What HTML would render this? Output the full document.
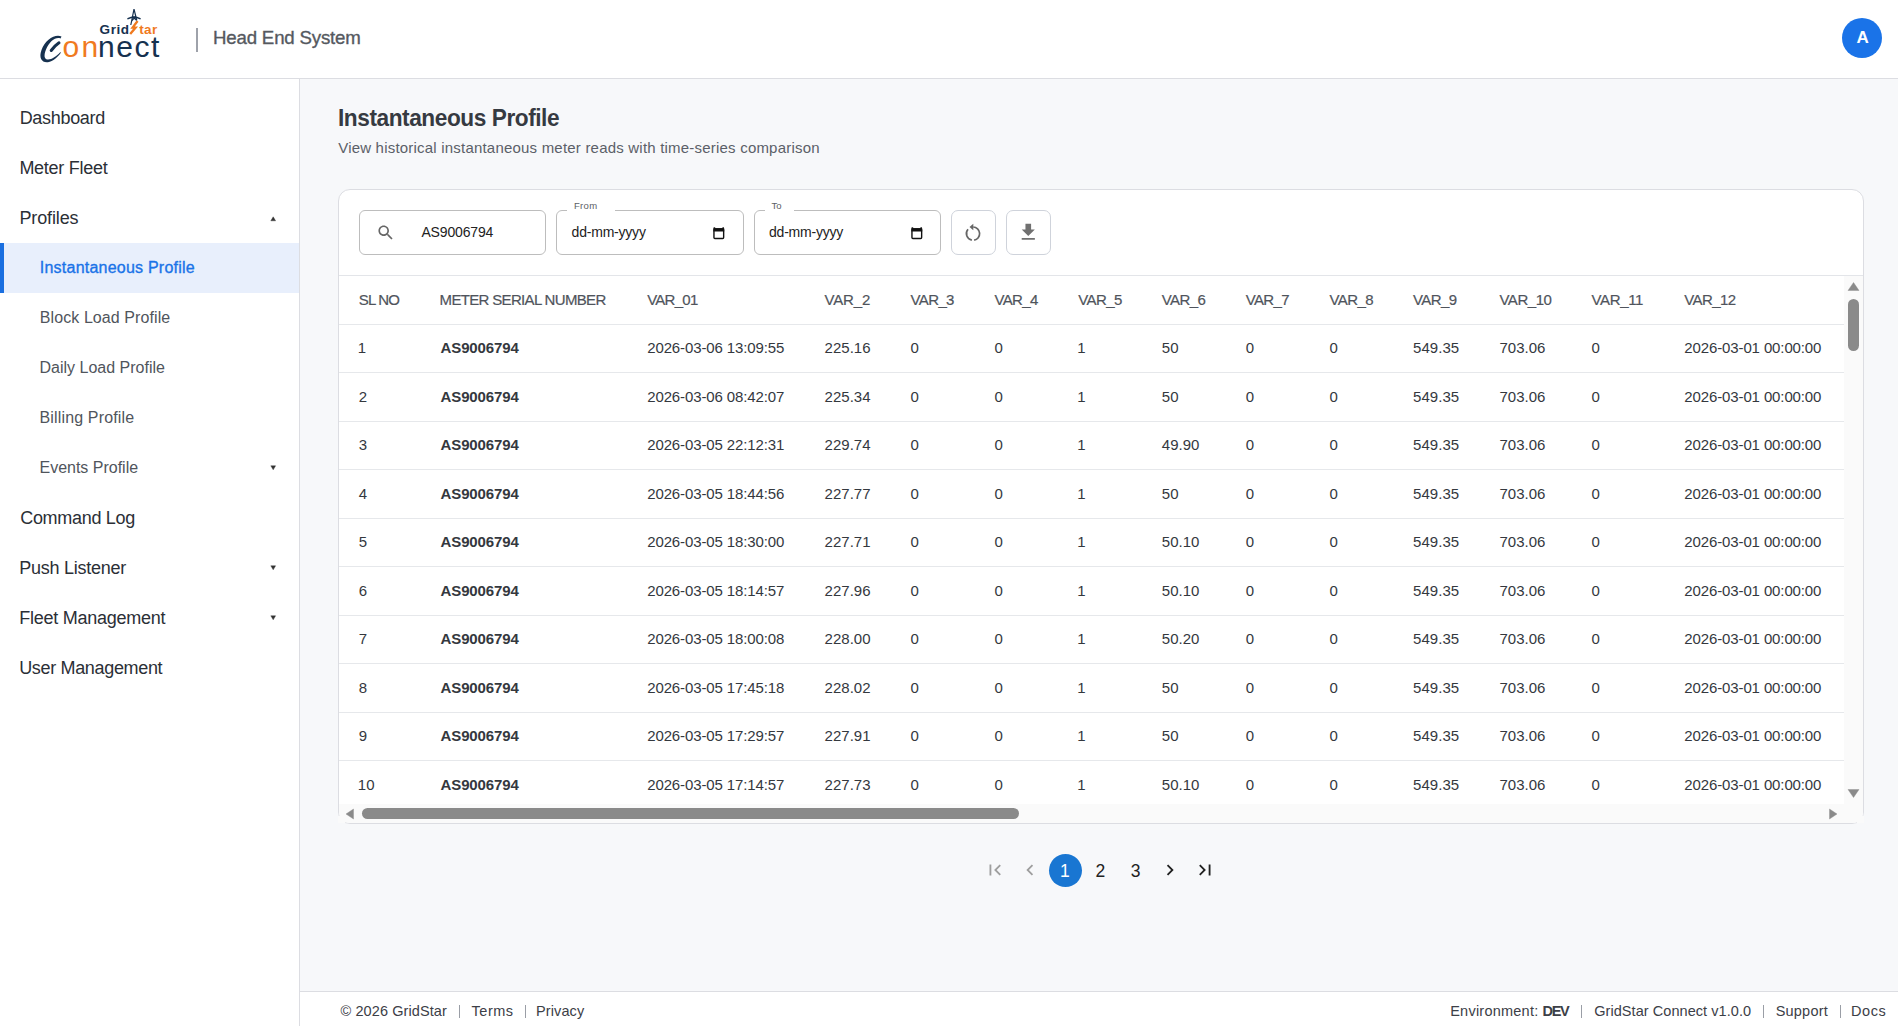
<!DOCTYPE html>
<html><head><meta charset="utf-8">
<style>
*{box-sizing:border-box;margin:0;padding:0}
html,body{width:1898px;height:1026px;overflow:hidden;background:#f7f8fa;font-family:"Liberation Sans",sans-serif}
.a{position:absolute}
.t{position:absolute;line-height:1;white-space:nowrap}
svg{position:absolute;overflow:visible}
</style></head><body>
<!-- header -->
<div class="a" style="left:0;top:0;width:1898px;height:78px;background:#fff"></div>
<div class="a" style="left:0;top:78px;width:1898px;height:1px;background:#dcdde2"></div>
<div class="a" style="left:196px;top:28px;width:2px;height:24px;background:#9ea2aa"></div>
<div class="a" style="left:1842px;top:18px;width:40px;height:40px;border-radius:50%;background:#1a73e8"></div>
<!-- logo -->
<svg style="left:0;top:0" width="200" height="78" viewBox="0 0 200 78">
<text x="99.6" y="33.8" font-family="Liberation Sans" font-weight="bold" font-size="13.5" fill="#16314f" letter-spacing="0.55">Grid</text>
<path d="M137.6 21 L132.6 27.6 L135.6 27.6 L130.2 34" fill="none" stroke="#f07a1f" stroke-width="2.3" stroke-linejoin="miter"/>
<text x="139.2" y="33.8" font-family="Liberation Sans" font-weight="bold" font-size="13.5" fill="#f07a1f" letter-spacing="0.4">tar</text>
<path d="M134 9.2 L130.8 25 M134 9.2 L136.8 20.5 M132.6 16.5 L136.2 20 M135.4 16.5 L131.6 21" fill="none" stroke="#16314f" stroke-width="1.2" stroke-linejoin="round"/>
<path d="M128 18.6 Q134 15.6 140 18.6" fill="none" stroke="#16314f" stroke-width="1.6" stroke-linecap="round"/>
<path d="M61.5 36.5 C55 33.5 45 40 41.5 50 C38.5 58 42 63 48 62.2 C53 61.5 58 57 61 52.5 L60.2 52.3 C56.5 56.5 51.5 59.8 47.5 59.5 C44 59 43.8 55 46 49.5 C49.5 41 56 36.5 60.5 38.5 Z" fill="#16314f"/>
<path d="M51.2 50.5 Q55 45.5 59 42.8" fill="none" stroke="#16314f" stroke-width="3" stroke-linecap="round"/>
<text x="62.4" y="57.4" font-family="Liberation Sans" font-size="30" fill="#f07a1f" letter-spacing="2.3">on</text>
<text x="97.9" y="57.4" font-family="Liberation Sans" font-size="30" fill="#16314f" letter-spacing="1.6">nect</text>
</svg>
<!-- sidebar -->
<div class="a" style="left:0;top:79px;width:299px;height:947px;background:#fff"></div>
<div class="a" style="left:299px;top:79px;width:1px;height:947px;background:#dcdde2"></div>
<div class="a" style="left:0;top:243px;width:299px;height:50px;background:#e8effc"></div>
<div class="a" style="left:0;top:243px;width:4px;height:50px;background:#1a6fe0"></div>
<svg style="left:0;top:0" width="1" height="1"><polygon points="273.20000000000005,216.8 275.6,220.8 270.8,220.8" fill="#333" stroke="#333" stroke-width="0.4" stroke-linejoin="round"/></svg>
<svg style="left:0;top:0" width="1" height="1"><polygon points="270.8,465.8 275.6,465.8 273.20000000000005,469.8" fill="#333" stroke="#333" stroke-width="0.4" stroke-linejoin="round"/></svg>
<svg style="left:0;top:0" width="1" height="1"><polygon points="270.8,565.8 275.6,565.8 273.20000000000005,569.8" fill="#333" stroke="#333" stroke-width="0.4" stroke-linejoin="round"/></svg>
<svg style="left:0;top:0" width="1" height="1"><polygon points="270.8,615.8 275.6,615.8 273.20000000000005,619.8" fill="#333" stroke="#333" stroke-width="0.4" stroke-linejoin="round"/></svg>
<!-- card -->
<div class="a" style="left:338px;top:189px;width:1526px;height:635px;background:#fff;border:1px solid #dcdde2;border-radius:12px;overflow:hidden">
  <div class="a" style="left:0;top:85px;width:1524px;height:1px;background:#e3e5e9"></div>
  <div class="a" style="left:0;top:134px;width:1524px;height:1px;background:#e6e8eb"></div>
<div class="a" style="left:0;top:182px;width:1505px;height:1px;background:#e6e8eb"></div>
<div class="a" style="left:0;top:231px;width:1505px;height:1px;background:#e6e8eb"></div>
<div class="a" style="left:0;top:279px;width:1505px;height:1px;background:#e6e8eb"></div>
<div class="a" style="left:0;top:328px;width:1505px;height:1px;background:#e6e8eb"></div>
<div class="a" style="left:0;top:376px;width:1505px;height:1px;background:#e6e8eb"></div>
<div class="a" style="left:0;top:425px;width:1505px;height:1px;background:#e6e8eb"></div>
<div class="a" style="left:0;top:473px;width:1505px;height:1px;background:#e6e8eb"></div>
<div class="a" style="left:0;top:522px;width:1505px;height:1px;background:#e6e8eb"></div>
<div class="a" style="left:0;top:570px;width:1505px;height:1px;background:#e6e8eb"></div>
  <!-- scrollbars -->
  <div class="a" style="left:1505px;top:86px;width:19px;height:548px;background:#fafafa"></div>
  <div class="a" style="left:0;top:614px;width:1524px;height:20px;background:#fafafa"></div>
  <div class="a" style="left:1509px;top:109px;width:11px;height:52px;border-radius:6px;background:#8a8a8a"></div>
  <div class="a" style="left:23px;top:618px;width:657px;height:11px;border-radius:6px;background:#8a8a8a"></div>
  <svg style="left:0;top:0" width="1" height="1"><polygon points="1514.5,92.5 1520,100.5 1509,100.5" fill="#8a8a8a" stroke="#8a8a8a" stroke-width="0.4" stroke-linejoin="round"/><polygon points="1509,599.5 1520,599.5 1514.5,607.5" fill="#8a8a8a" stroke="#8a8a8a" stroke-width="0.4" stroke-linejoin="round"/><polygon points="14.5,619 14.5,629 7,624.0" fill="#8a8a8a" stroke="#8a8a8a" stroke-width="0.4" stroke-linejoin="round"/><polygon points="1490.5,619 1498,624.0 1490.5,629" fill="#8a8a8a" stroke="#8a8a8a" stroke-width="0.4" stroke-linejoin="round"/></svg>
</div>
<div class="a" style="left:338px;top:816px;width:7px;height:7px;background:#fafafa"></div>
<div class="a" style="left:1857px;top:816px;width:7px;height:7px;background:#fafafa"></div>
<!-- toolbar boxes -->
<div class="a" style="left:359px;top:210px;width:187px;height:45px;border:1px solid #bdbdbd;border-radius:6px;background:#fff"></div>
<div class="a" style="left:556px;top:210px;width:188px;height:45px;border:1px solid #bdbdbd;border-radius:6px;background:#fff"></div>
<div class="a" style="left:567px;top:208px;width:48px;height:4px;background:#fff"></div>
<div class="a" style="left:754px;top:210px;width:187px;height:45px;border:1px solid #bdbdbd;border-radius:6px;background:#fff"></div>
<div class="a" style="left:765px;top:208px;width:29px;height:4px;background:#fff"></div>
<div class="a" style="left:951px;top:210px;width:45px;height:45px;border:1px solid #cfd3db;border-radius:7px;background:#fff"></div>
<div class="a" style="left:1006px;top:210px;width:45px;height:45px;border:1px solid #cfd3db;border-radius:7px;background:#fff"></div>
<svg style="left:376.3px;top:223.2px" width="24" height="24" viewBox="0 0 24 24" transform="scale(1)"><g transform="scale(0.81)"><path fill="#666" d="M15.5 14h-.79l-.28-.27C15.41 12.59 16 11.11 16 9.5 16 5.91 13.09 3 9.5 3S3 5.91 3 9.5 5.91 16 9.5 16c1.61 0 3.09-.59 4.23-1.57l.27.28v.79l5 4.99L20.49 19l-4.99-5zm-6 0C7.01 14 5 11.99 5 9.5S7.01 5 9.5 5 14 7.01 14 9.5 11.99 14 9.5 14z"/></g></svg>
<svg style="left:713.2px;top:226.5px" width="12" height="13" viewBox="0 0 12 13"><rect x="0.95" y="1.9" width="9.7" height="9.6" rx="0.9" fill="none" stroke="#111" stroke-width="1.4"/><rect x="0.4" y="1.2" width="10.8" height="3.3" fill="#111"/><rect x="0.6" y="0.3" width="1.6" height="1.5" fill="#111"/><rect x="9.4" y="0.3" width="1.6" height="1.5" fill="#111"/></svg>
<svg style="left:911.4px;top:226.5px" width="12" height="13" viewBox="0 0 12 13"><rect x="0.95" y="1.9" width="9.7" height="9.6" rx="0.9" fill="none" stroke="#111" stroke-width="1.4"/><rect x="0.4" y="1.2" width="10.8" height="3.3" fill="#111"/><rect x="0.6" y="0.3" width="1.6" height="1.5" fill="#111"/><rect x="9.4" y="0.3" width="1.6" height="1.5" fill="#111"/></svg>
<svg style="left:961.4px;top:221.6px" width="24" height="24" viewBox="0 0 24 24"><path d="M12.2 5 A6.6 6.6 0 0 1 13.15 18.1 M10.85 18.1 A6.6 6.6 0 0 1 7.0 7.3" fill="none" stroke="#666" stroke-width="1.7"/><polygon points="8.5,5.0 12.3,1.7 12.3,8.3" fill="#666"/></svg>
<svg style="left:1017.1px;top:220.8px" width="24" height="24" viewBox="0 0 24 24"><g transform="scale(0.94)"><path fill="#707070" d="M19 9h-4V3H9v6H5l7 7 7-7zM5 18v2h14v-2H5z"/></g></svg>
<!-- pagination -->
<div class="a" style="left:1049px;top:854px;width:33px;height:33px;border-radius:50%;background:#1976d2"></div>
<svg style="left:983.5px;top:859.3px" width="24" height="24" viewBox="0 0 24 24"><g transform="scale(0.917)"><path fill="#9e9e9e" d="M18.41 16.59L13.82 12l4.59-4.59L17 6l-6 6 6 6zM6 6h2v12H6z"/></g></svg>
<svg style="left:1019.4px;top:859.3px" width="24" height="24" viewBox="0 0 24 24"><g transform="scale(0.917)"><path fill="#9e9e9e" d="M15.41 7.41L14 6l-6 6 6 6 1.41-1.41L10.83 12z"/></g></svg>
<svg style="left:1158.6px;top:859.3px" width="24" height="24" viewBox="0 0 24 24"><g transform="scale(0.917)"><path fill="#212121" d="M10 6L8.59 7.41 13.17 12l-4.58 4.59L10 18l6-6z"/></g></svg>
<svg style="left:1194.2px;top:859.3px" width="24" height="24" viewBox="0 0 24 24"><g transform="scale(0.917)"><path fill="#212121" d="M5.59 7.41L10.18 12l-4.59 4.59L7 18l6-6-6-6zM16 6h2v12h-2z"/></g></svg>
<!-- footer -->
<div class="a" style="left:300px;top:991px;width:1598px;height:35px;background:#fff"></div>
<div class="a" style="left:300px;top:991px;width:1598px;height:1px;background:#dcdde2"></div>
<div class="a" style="left:459px;top:1005px;width:1px;height:13px;background:#9a9ea6"></div>
<div class="a" style="left:525px;top:1005px;width:1px;height:13px;background:#9a9ea6"></div>
<div class="a" style="left:1581px;top:1005px;width:1px;height:13px;background:#9a9ea6"></div>
<div class="a" style="left:1763px;top:1005px;width:1px;height:13px;background:#9a9ea6"></div>
<div class="a" style="left:1840px;top:1005px;width:1px;height:13px;background:#9a9ea6"></div>
<div class="t" style="left:212.72px;top:28.00px;font-size:19px;color:#55595f;-webkit-text-stroke:0.35px #55595f;letter-spacing:-0.193px;transform:scaleX(0.9825);transform-origin:0 0;">Head End System</div>
<div class="t" style="left:19.70px;top:109.00px;font-size:18px;color:#2b2f36;letter-spacing:-0.318px;">Dashboard</div>
<div class="t" style="left:19.40px;top:159.00px;font-size:18px;color:#2b2f36;letter-spacing:-0.273px;">Meter Fleet</div>
<div class="t" style="left:19.50px;top:209.00px;font-size:18px;color:#2b2f36;letter-spacing:-0.146px;">Profiles</div>
<div class="t" style="left:39.80px;top:260.00px;font-size:16px;color:#1a73e8;-webkit-text-stroke:0.35px #1a73e8;letter-spacing:0.229px;">Instantaneous Profile</div>
<div class="t" style="left:39.80px;top:310.00px;font-size:16px;color:#50555c;letter-spacing:0.085px;">Block Load Profile</div>
<div class="t" style="left:39.50px;top:360.00px;font-size:16px;color:#50555c;">Daily Load Profile</div>
<div class="t" style="left:39.50px;top:410.00px;font-size:16px;color:#50555c;letter-spacing:0.151px;">Billing Profile</div>
<div class="t" style="left:39.50px;top:460.00px;font-size:16px;color:#50555c;letter-spacing:-0.009px;">Events Profile</div>
<div class="t" style="left:20.20px;top:509.00px;font-size:18px;color:#2b2f36;letter-spacing:-0.305px;">Command Log</div>
<div class="t" style="left:19.20px;top:559.00px;font-size:18px;color:#2b2f36;letter-spacing:-0.256px;">Push Listener</div>
<div class="t" style="left:19.20px;top:609.00px;font-size:18px;color:#2b2f36;letter-spacing:-0.259px;">Fleet Management</div>
<div class="t" style="left:19.20px;top:659.00px;font-size:18px;color:#2b2f36;letter-spacing:-0.333px;">User Management</div>
<div class="t" style="left:337.66px;top:106.00px;font-size:24px;color:#363a41;font-weight:bold;letter-spacing:-0.474px;transform:scaleX(0.9446);transform-origin:0 0;">Instantaneous Profile</div>
<div class="t" style="left:338.20px;top:140.00px;font-size:15px;color:#5b6068;letter-spacing:0.205px;">View historical instantaneous meter reads with time-series comparison</div>
<div class="t" style="left:421.40px;top:225.00px;font-size:14px;color:#222222;letter-spacing:-0.149px;">AS9006794</div>
<div class="t" style="left:573.90px;top:201.00px;font-size:9.5px;color:#5a5e65;letter-spacing:0.383px;">From</div>
<div class="t" style="left:571.60px;top:225.00px;font-size:14px;color:#222222;letter-spacing:-0.213px;">dd-mm-yyyy</div>
<div class="t" style="left:771.60px;top:201.00px;font-size:9.5px;color:#5a5e65;">To</div>
<div class="t" style="left:769.00px;top:225.00px;font-size:14px;color:#222222;letter-spacing:-0.213px;">dd-mm-yyyy</div>
<div class="t" style="left:358.80px;top:292.00px;font-size:15px;color:#4f545c;-webkit-text-stroke:0.2px #4f545c;letter-spacing:-0.812px;">SL NO</div>
<div class="t" style="left:439.60px;top:292.00px;font-size:15px;color:#4f545c;-webkit-text-stroke:0.2px #4f545c;letter-spacing:-0.665px;">METER SERIAL NUMBER</div>
<div class="t" style="left:647.20px;top:292.00px;font-size:15px;color:#4f545c;-webkit-text-stroke:0.2px #4f545c;letter-spacing:-0.743px;">VAR_01</div>
<div class="t" style="left:824.50px;top:292.00px;font-size:15px;color:#4f545c;-webkit-text-stroke:0.2px #4f545c;letter-spacing:-0.143px;">VAR_2</div>
<div class="t" style="left:910.50px;top:292.00px;font-size:15px;color:#4f545c;-webkit-text-stroke:0.2px #4f545c;letter-spacing:-0.618px;">VAR_3</div>
<div class="t" style="left:994.40px;top:292.00px;font-size:15px;color:#4f545c;-webkit-text-stroke:0.2px #4f545c;letter-spacing:-0.618px;">VAR_4</div>
<div class="t" style="left:1078.30px;top:292.00px;font-size:15px;color:#4f545c;-webkit-text-stroke:0.2px #4f545c;letter-spacing:-0.618px;">VAR_5</div>
<div class="t" style="left:1161.80px;top:292.00px;font-size:15px;color:#4f545c;-webkit-text-stroke:0.2px #4f545c;letter-spacing:-0.618px;">VAR_6</div>
<div class="t" style="left:1245.70px;top:292.00px;font-size:15px;color:#4f545c;-webkit-text-stroke:0.2px #4f545c;letter-spacing:-0.618px;">VAR_7</div>
<div class="t" style="left:1329.60px;top:292.00px;font-size:15px;color:#4f545c;-webkit-text-stroke:0.2px #4f545c;letter-spacing:-0.618px;">VAR_8</div>
<div class="t" style="left:1413.10px;top:292.00px;font-size:15px;color:#4f545c;-webkit-text-stroke:0.2px #4f545c;letter-spacing:-0.618px;">VAR_9</div>
<div class="t" style="left:1499.40px;top:292.00px;font-size:15px;color:#4f545c;-webkit-text-stroke:0.2px #4f545c;letter-spacing:-0.443px;">VAR_10</div>
<div class="t" style="left:1591.40px;top:292.00px;font-size:15px;color:#4f545c;-webkit-text-stroke:0.2px #4f545c;letter-spacing:-0.320px;">VAR_11</div>
<div class="t" style="left:1684.30px;top:292.00px;font-size:15px;color:#4f545c;-webkit-text-stroke:0.2px #4f545c;letter-spacing:-0.583px;">VAR_12</div>
<div class="t" style="left:357.80px;top:340.00px;font-size:15px;color:#34383e;">1</div>
<div class="t" style="left:440.60px;top:340.00px;font-size:15px;color:#34383e;font-weight:bold;letter-spacing:-0.136px;">AS9006794</div>
<div class="t" style="left:647.20px;top:340.00px;font-size:15px;color:#34383e;letter-spacing:-0.119px;">2026-03-06 13:09:55</div>
<div class="t" style="left:824.50px;top:340.00px;font-size:15px;color:#34383e;letter-spacing:0.033px;">225.16</div>
<div class="t" style="left:910.50px;top:340.00px;font-size:15px;color:#34383e;">0</div>
<div class="t" style="left:994.40px;top:340.00px;font-size:15px;color:#34383e;">0</div>
<div class="t" style="left:1077.30px;top:340.00px;font-size:15px;color:#34383e;">1</div>
<div class="t" style="left:1161.80px;top:340.00px;font-size:15px;color:#34383e;">50</div>
<div class="t" style="left:1245.70px;top:340.00px;font-size:15px;color:#34383e;">0</div>
<div class="t" style="left:1329.60px;top:340.00px;font-size:15px;color:#34383e;">0</div>
<div class="t" style="left:1413.10px;top:340.00px;font-size:15px;color:#34383e;letter-spacing:0.033px;">549.35</div>
<div class="t" style="left:1499.40px;top:340.00px;font-size:15px;color:#34383e;letter-spacing:0.033px;">703.06</div>
<div class="t" style="left:1591.40px;top:340.00px;font-size:15px;color:#34383e;">0</div>
<div class="t" style="left:1684.30px;top:340.00px;font-size:15px;color:#34383e;letter-spacing:-0.119px;">2026-03-01 00:00:00</div>
<div class="t" style="left:358.80px;top:389.00px;font-size:15px;color:#34383e;">2</div>
<div class="t" style="left:440.60px;top:389.00px;font-size:15px;color:#34383e;font-weight:bold;letter-spacing:-0.136px;">AS9006794</div>
<div class="t" style="left:647.20px;top:389.00px;font-size:15px;color:#34383e;letter-spacing:-0.119px;">2026-03-06 08:42:07</div>
<div class="t" style="left:824.50px;top:389.00px;font-size:15px;color:#34383e;letter-spacing:0.033px;">225.34</div>
<div class="t" style="left:910.50px;top:389.00px;font-size:15px;color:#34383e;">0</div>
<div class="t" style="left:994.40px;top:389.00px;font-size:15px;color:#34383e;">0</div>
<div class="t" style="left:1077.30px;top:389.00px;font-size:15px;color:#34383e;">1</div>
<div class="t" style="left:1161.80px;top:389.00px;font-size:15px;color:#34383e;">50</div>
<div class="t" style="left:1245.70px;top:389.00px;font-size:15px;color:#34383e;">0</div>
<div class="t" style="left:1329.60px;top:389.00px;font-size:15px;color:#34383e;">0</div>
<div class="t" style="left:1413.10px;top:389.00px;font-size:15px;color:#34383e;letter-spacing:0.033px;">549.35</div>
<div class="t" style="left:1499.40px;top:389.00px;font-size:15px;color:#34383e;letter-spacing:0.033px;">703.06</div>
<div class="t" style="left:1591.40px;top:389.00px;font-size:15px;color:#34383e;">0</div>
<div class="t" style="left:1684.30px;top:389.00px;font-size:15px;color:#34383e;letter-spacing:-0.119px;">2026-03-01 00:00:00</div>
<div class="t" style="left:358.80px;top:437.00px;font-size:15px;color:#34383e;">3</div>
<div class="t" style="left:440.60px;top:437.00px;font-size:15px;color:#34383e;font-weight:bold;letter-spacing:-0.136px;">AS9006794</div>
<div class="t" style="left:647.20px;top:437.00px;font-size:15px;color:#34383e;letter-spacing:-0.119px;">2026-03-05 22:12:31</div>
<div class="t" style="left:824.50px;top:437.00px;font-size:15px;color:#34383e;letter-spacing:0.033px;">229.74</div>
<div class="t" style="left:910.50px;top:437.00px;font-size:15px;color:#34383e;">0</div>
<div class="t" style="left:994.40px;top:437.00px;font-size:15px;color:#34383e;">0</div>
<div class="t" style="left:1077.30px;top:437.00px;font-size:15px;color:#34383e;">1</div>
<div class="t" style="left:1161.80px;top:437.00px;font-size:15px;color:#34383e;">49.90</div>
<div class="t" style="left:1245.70px;top:437.00px;font-size:15px;color:#34383e;">0</div>
<div class="t" style="left:1329.60px;top:437.00px;font-size:15px;color:#34383e;">0</div>
<div class="t" style="left:1413.10px;top:437.00px;font-size:15px;color:#34383e;letter-spacing:0.033px;">549.35</div>
<div class="t" style="left:1499.40px;top:437.00px;font-size:15px;color:#34383e;letter-spacing:0.033px;">703.06</div>
<div class="t" style="left:1591.40px;top:437.00px;font-size:15px;color:#34383e;">0</div>
<div class="t" style="left:1684.30px;top:437.00px;font-size:15px;color:#34383e;letter-spacing:-0.119px;">2026-03-01 00:00:00</div>
<div class="t" style="left:358.80px;top:486.00px;font-size:15px;color:#34383e;">4</div>
<div class="t" style="left:440.60px;top:486.00px;font-size:15px;color:#34383e;font-weight:bold;letter-spacing:-0.136px;">AS9006794</div>
<div class="t" style="left:647.20px;top:486.00px;font-size:15px;color:#34383e;letter-spacing:-0.119px;">2026-03-05 18:44:56</div>
<div class="t" style="left:824.50px;top:486.00px;font-size:15px;color:#34383e;letter-spacing:0.033px;">227.77</div>
<div class="t" style="left:910.50px;top:486.00px;font-size:15px;color:#34383e;">0</div>
<div class="t" style="left:994.40px;top:486.00px;font-size:15px;color:#34383e;">0</div>
<div class="t" style="left:1077.30px;top:486.00px;font-size:15px;color:#34383e;">1</div>
<div class="t" style="left:1161.80px;top:486.00px;font-size:15px;color:#34383e;">50</div>
<div class="t" style="left:1245.70px;top:486.00px;font-size:15px;color:#34383e;">0</div>
<div class="t" style="left:1329.60px;top:486.00px;font-size:15px;color:#34383e;">0</div>
<div class="t" style="left:1413.10px;top:486.00px;font-size:15px;color:#34383e;letter-spacing:0.033px;">549.35</div>
<div class="t" style="left:1499.40px;top:486.00px;font-size:15px;color:#34383e;letter-spacing:0.033px;">703.06</div>
<div class="t" style="left:1591.40px;top:486.00px;font-size:15px;color:#34383e;">0</div>
<div class="t" style="left:1684.30px;top:486.00px;font-size:15px;color:#34383e;letter-spacing:-0.119px;">2026-03-01 00:00:00</div>
<div class="t" style="left:358.80px;top:534.00px;font-size:15px;color:#34383e;">5</div>
<div class="t" style="left:440.60px;top:534.00px;font-size:15px;color:#34383e;font-weight:bold;letter-spacing:-0.136px;">AS9006794</div>
<div class="t" style="left:647.20px;top:534.00px;font-size:15px;color:#34383e;letter-spacing:-0.119px;">2026-03-05 18:30:00</div>
<div class="t" style="left:824.50px;top:534.00px;font-size:15px;color:#34383e;letter-spacing:0.033px;">227.71</div>
<div class="t" style="left:910.50px;top:534.00px;font-size:15px;color:#34383e;">0</div>
<div class="t" style="left:994.40px;top:534.00px;font-size:15px;color:#34383e;">0</div>
<div class="t" style="left:1077.30px;top:534.00px;font-size:15px;color:#34383e;">1</div>
<div class="t" style="left:1161.80px;top:534.00px;font-size:15px;color:#34383e;">50.10</div>
<div class="t" style="left:1245.70px;top:534.00px;font-size:15px;color:#34383e;">0</div>
<div class="t" style="left:1329.60px;top:534.00px;font-size:15px;color:#34383e;">0</div>
<div class="t" style="left:1413.10px;top:534.00px;font-size:15px;color:#34383e;letter-spacing:0.033px;">549.35</div>
<div class="t" style="left:1499.40px;top:534.00px;font-size:15px;color:#34383e;letter-spacing:0.033px;">703.06</div>
<div class="t" style="left:1591.40px;top:534.00px;font-size:15px;color:#34383e;">0</div>
<div class="t" style="left:1684.30px;top:534.00px;font-size:15px;color:#34383e;letter-spacing:-0.119px;">2026-03-01 00:00:00</div>
<div class="t" style="left:358.80px;top:583.00px;font-size:15px;color:#34383e;">6</div>
<div class="t" style="left:440.60px;top:583.00px;font-size:15px;color:#34383e;font-weight:bold;letter-spacing:-0.136px;">AS9006794</div>
<div class="t" style="left:647.20px;top:583.00px;font-size:15px;color:#34383e;letter-spacing:-0.119px;">2026-03-05 18:14:57</div>
<div class="t" style="left:824.50px;top:583.00px;font-size:15px;color:#34383e;letter-spacing:0.033px;">227.96</div>
<div class="t" style="left:910.50px;top:583.00px;font-size:15px;color:#34383e;">0</div>
<div class="t" style="left:994.40px;top:583.00px;font-size:15px;color:#34383e;">0</div>
<div class="t" style="left:1077.30px;top:583.00px;font-size:15px;color:#34383e;">1</div>
<div class="t" style="left:1161.80px;top:583.00px;font-size:15px;color:#34383e;">50.10</div>
<div class="t" style="left:1245.70px;top:583.00px;font-size:15px;color:#34383e;">0</div>
<div class="t" style="left:1329.60px;top:583.00px;font-size:15px;color:#34383e;">0</div>
<div class="t" style="left:1413.10px;top:583.00px;font-size:15px;color:#34383e;letter-spacing:0.033px;">549.35</div>
<div class="t" style="left:1499.40px;top:583.00px;font-size:15px;color:#34383e;letter-spacing:0.033px;">703.06</div>
<div class="t" style="left:1591.40px;top:583.00px;font-size:15px;color:#34383e;">0</div>
<div class="t" style="left:1684.30px;top:583.00px;font-size:15px;color:#34383e;letter-spacing:-0.119px;">2026-03-01 00:00:00</div>
<div class="t" style="left:358.80px;top:631.00px;font-size:15px;color:#34383e;">7</div>
<div class="t" style="left:440.60px;top:631.00px;font-size:15px;color:#34383e;font-weight:bold;letter-spacing:-0.136px;">AS9006794</div>
<div class="t" style="left:647.20px;top:631.00px;font-size:15px;color:#34383e;letter-spacing:-0.119px;">2026-03-05 18:00:08</div>
<div class="t" style="left:824.50px;top:631.00px;font-size:15px;color:#34383e;letter-spacing:0.033px;">228.00</div>
<div class="t" style="left:910.50px;top:631.00px;font-size:15px;color:#34383e;">0</div>
<div class="t" style="left:994.40px;top:631.00px;font-size:15px;color:#34383e;">0</div>
<div class="t" style="left:1077.30px;top:631.00px;font-size:15px;color:#34383e;">1</div>
<div class="t" style="left:1161.80px;top:631.00px;font-size:15px;color:#34383e;">50.20</div>
<div class="t" style="left:1245.70px;top:631.00px;font-size:15px;color:#34383e;">0</div>
<div class="t" style="left:1329.60px;top:631.00px;font-size:15px;color:#34383e;">0</div>
<div class="t" style="left:1413.10px;top:631.00px;font-size:15px;color:#34383e;letter-spacing:0.033px;">549.35</div>
<div class="t" style="left:1499.40px;top:631.00px;font-size:15px;color:#34383e;letter-spacing:0.033px;">703.06</div>
<div class="t" style="left:1591.40px;top:631.00px;font-size:15px;color:#34383e;">0</div>
<div class="t" style="left:1684.30px;top:631.00px;font-size:15px;color:#34383e;letter-spacing:-0.119px;">2026-03-01 00:00:00</div>
<div class="t" style="left:358.80px;top:680.00px;font-size:15px;color:#34383e;">8</div>
<div class="t" style="left:440.60px;top:680.00px;font-size:15px;color:#34383e;font-weight:bold;letter-spacing:-0.136px;">AS9006794</div>
<div class="t" style="left:647.20px;top:680.00px;font-size:15px;color:#34383e;letter-spacing:-0.119px;">2026-03-05 17:45:18</div>
<div class="t" style="left:824.50px;top:680.00px;font-size:15px;color:#34383e;letter-spacing:0.033px;">228.02</div>
<div class="t" style="left:910.50px;top:680.00px;font-size:15px;color:#34383e;">0</div>
<div class="t" style="left:994.40px;top:680.00px;font-size:15px;color:#34383e;">0</div>
<div class="t" style="left:1077.30px;top:680.00px;font-size:15px;color:#34383e;">1</div>
<div class="t" style="left:1161.80px;top:680.00px;font-size:15px;color:#34383e;">50</div>
<div class="t" style="left:1245.70px;top:680.00px;font-size:15px;color:#34383e;">0</div>
<div class="t" style="left:1329.60px;top:680.00px;font-size:15px;color:#34383e;">0</div>
<div class="t" style="left:1413.10px;top:680.00px;font-size:15px;color:#34383e;letter-spacing:0.033px;">549.35</div>
<div class="t" style="left:1499.40px;top:680.00px;font-size:15px;color:#34383e;letter-spacing:0.033px;">703.06</div>
<div class="t" style="left:1591.40px;top:680.00px;font-size:15px;color:#34383e;">0</div>
<div class="t" style="left:1684.30px;top:680.00px;font-size:15px;color:#34383e;letter-spacing:-0.119px;">2026-03-01 00:00:00</div>
<div class="t" style="left:358.80px;top:728.00px;font-size:15px;color:#34383e;">9</div>
<div class="t" style="left:440.60px;top:728.00px;font-size:15px;color:#34383e;font-weight:bold;letter-spacing:-0.136px;">AS9006794</div>
<div class="t" style="left:647.20px;top:728.00px;font-size:15px;color:#34383e;letter-spacing:-0.119px;">2026-03-05 17:29:57</div>
<div class="t" style="left:824.50px;top:728.00px;font-size:15px;color:#34383e;letter-spacing:0.033px;">227.91</div>
<div class="t" style="left:910.50px;top:728.00px;font-size:15px;color:#34383e;">0</div>
<div class="t" style="left:994.40px;top:728.00px;font-size:15px;color:#34383e;">0</div>
<div class="t" style="left:1077.30px;top:728.00px;font-size:15px;color:#34383e;">1</div>
<div class="t" style="left:1161.80px;top:728.00px;font-size:15px;color:#34383e;">50</div>
<div class="t" style="left:1245.70px;top:728.00px;font-size:15px;color:#34383e;">0</div>
<div class="t" style="left:1329.60px;top:728.00px;font-size:15px;color:#34383e;">0</div>
<div class="t" style="left:1413.10px;top:728.00px;font-size:15px;color:#34383e;letter-spacing:0.033px;">549.35</div>
<div class="t" style="left:1499.40px;top:728.00px;font-size:15px;color:#34383e;letter-spacing:0.033px;">703.06</div>
<div class="t" style="left:1591.40px;top:728.00px;font-size:15px;color:#34383e;">0</div>
<div class="t" style="left:1684.30px;top:728.00px;font-size:15px;color:#34383e;letter-spacing:-0.119px;">2026-03-01 00:00:00</div>
<div class="t" style="left:357.80px;top:777.00px;font-size:15px;color:#34383e;">10</div>
<div class="t" style="left:440.60px;top:777.00px;font-size:15px;color:#34383e;font-weight:bold;letter-spacing:-0.136px;">AS9006794</div>
<div class="t" style="left:647.20px;top:777.00px;font-size:15px;color:#34383e;letter-spacing:-0.119px;">2026-03-05 17:14:57</div>
<div class="t" style="left:824.50px;top:777.00px;font-size:15px;color:#34383e;letter-spacing:0.033px;">227.73</div>
<div class="t" style="left:910.50px;top:777.00px;font-size:15px;color:#34383e;">0</div>
<div class="t" style="left:994.40px;top:777.00px;font-size:15px;color:#34383e;">0</div>
<div class="t" style="left:1077.30px;top:777.00px;font-size:15px;color:#34383e;">1</div>
<div class="t" style="left:1161.80px;top:777.00px;font-size:15px;color:#34383e;">50.10</div>
<div class="t" style="left:1245.70px;top:777.00px;font-size:15px;color:#34383e;">0</div>
<div class="t" style="left:1329.60px;top:777.00px;font-size:15px;color:#34383e;">0</div>
<div class="t" style="left:1413.10px;top:777.00px;font-size:15px;color:#34383e;letter-spacing:0.033px;">549.35</div>
<div class="t" style="left:1499.40px;top:777.00px;font-size:15px;color:#34383e;letter-spacing:0.033px;">703.06</div>
<div class="t" style="left:1591.40px;top:777.00px;font-size:15px;color:#34383e;">0</div>
<div class="t" style="left:1684.30px;top:777.00px;font-size:15px;color:#34383e;letter-spacing:-0.119px;">2026-03-01 00:00:00</div>
<div class="t" style="left:1060.00px;top:863.00px;font-size:17.5px;color:#ffffff;">1</div>
<div class="t" style="left:1095.40px;top:863.00px;font-size:17.5px;color:#222222;">2</div>
<div class="t" style="left:1130.70px;top:863.00px;font-size:17.5px;color:#222222;">3</div>
<div class="t" style="left:340.50px;top:1004.00px;font-size:14.5px;color:#3c4047;letter-spacing:0.096px;">© 2026 GridStar</div>
<div class="t" style="left:471.60px;top:1004.00px;font-size:14.5px;color:#3c4047;letter-spacing:0.495px;">Terms</div>
<div class="t" style="left:535.90px;top:1004.00px;font-size:14.5px;color:#3c4047;letter-spacing:0.136px;">Privacy</div>
<div class="t" style="left:1450.20px;top:1004.00px;font-size:14.5px;color:#3c4047;letter-spacing:0.236px;">Environment:</div>
<div class="t" style="left:1542.50px;top:1004.00px;font-size:14.5px;color:#3c4047;font-weight:bold;letter-spacing:-1.321px;">DEV</div>
<div class="t" style="left:1594.20px;top:1004.00px;font-size:14.5px;color:#3c4047;letter-spacing:0.060px;">GridStar Connect v1.0.0</div>
<div class="t" style="left:1775.70px;top:1004.00px;font-size:14.5px;color:#3c4047;letter-spacing:0.207px;">Support</div>
<div class="t" style="left:1851.10px;top:1004.00px;font-size:14.5px;color:#3c4047;letter-spacing:0.505px;">Docs</div>
<div class="t" style="left:1856.40px;top:29.00px;font-size:17px;color:#ffffff;font-weight:bold;">A</div>
</body></html>
